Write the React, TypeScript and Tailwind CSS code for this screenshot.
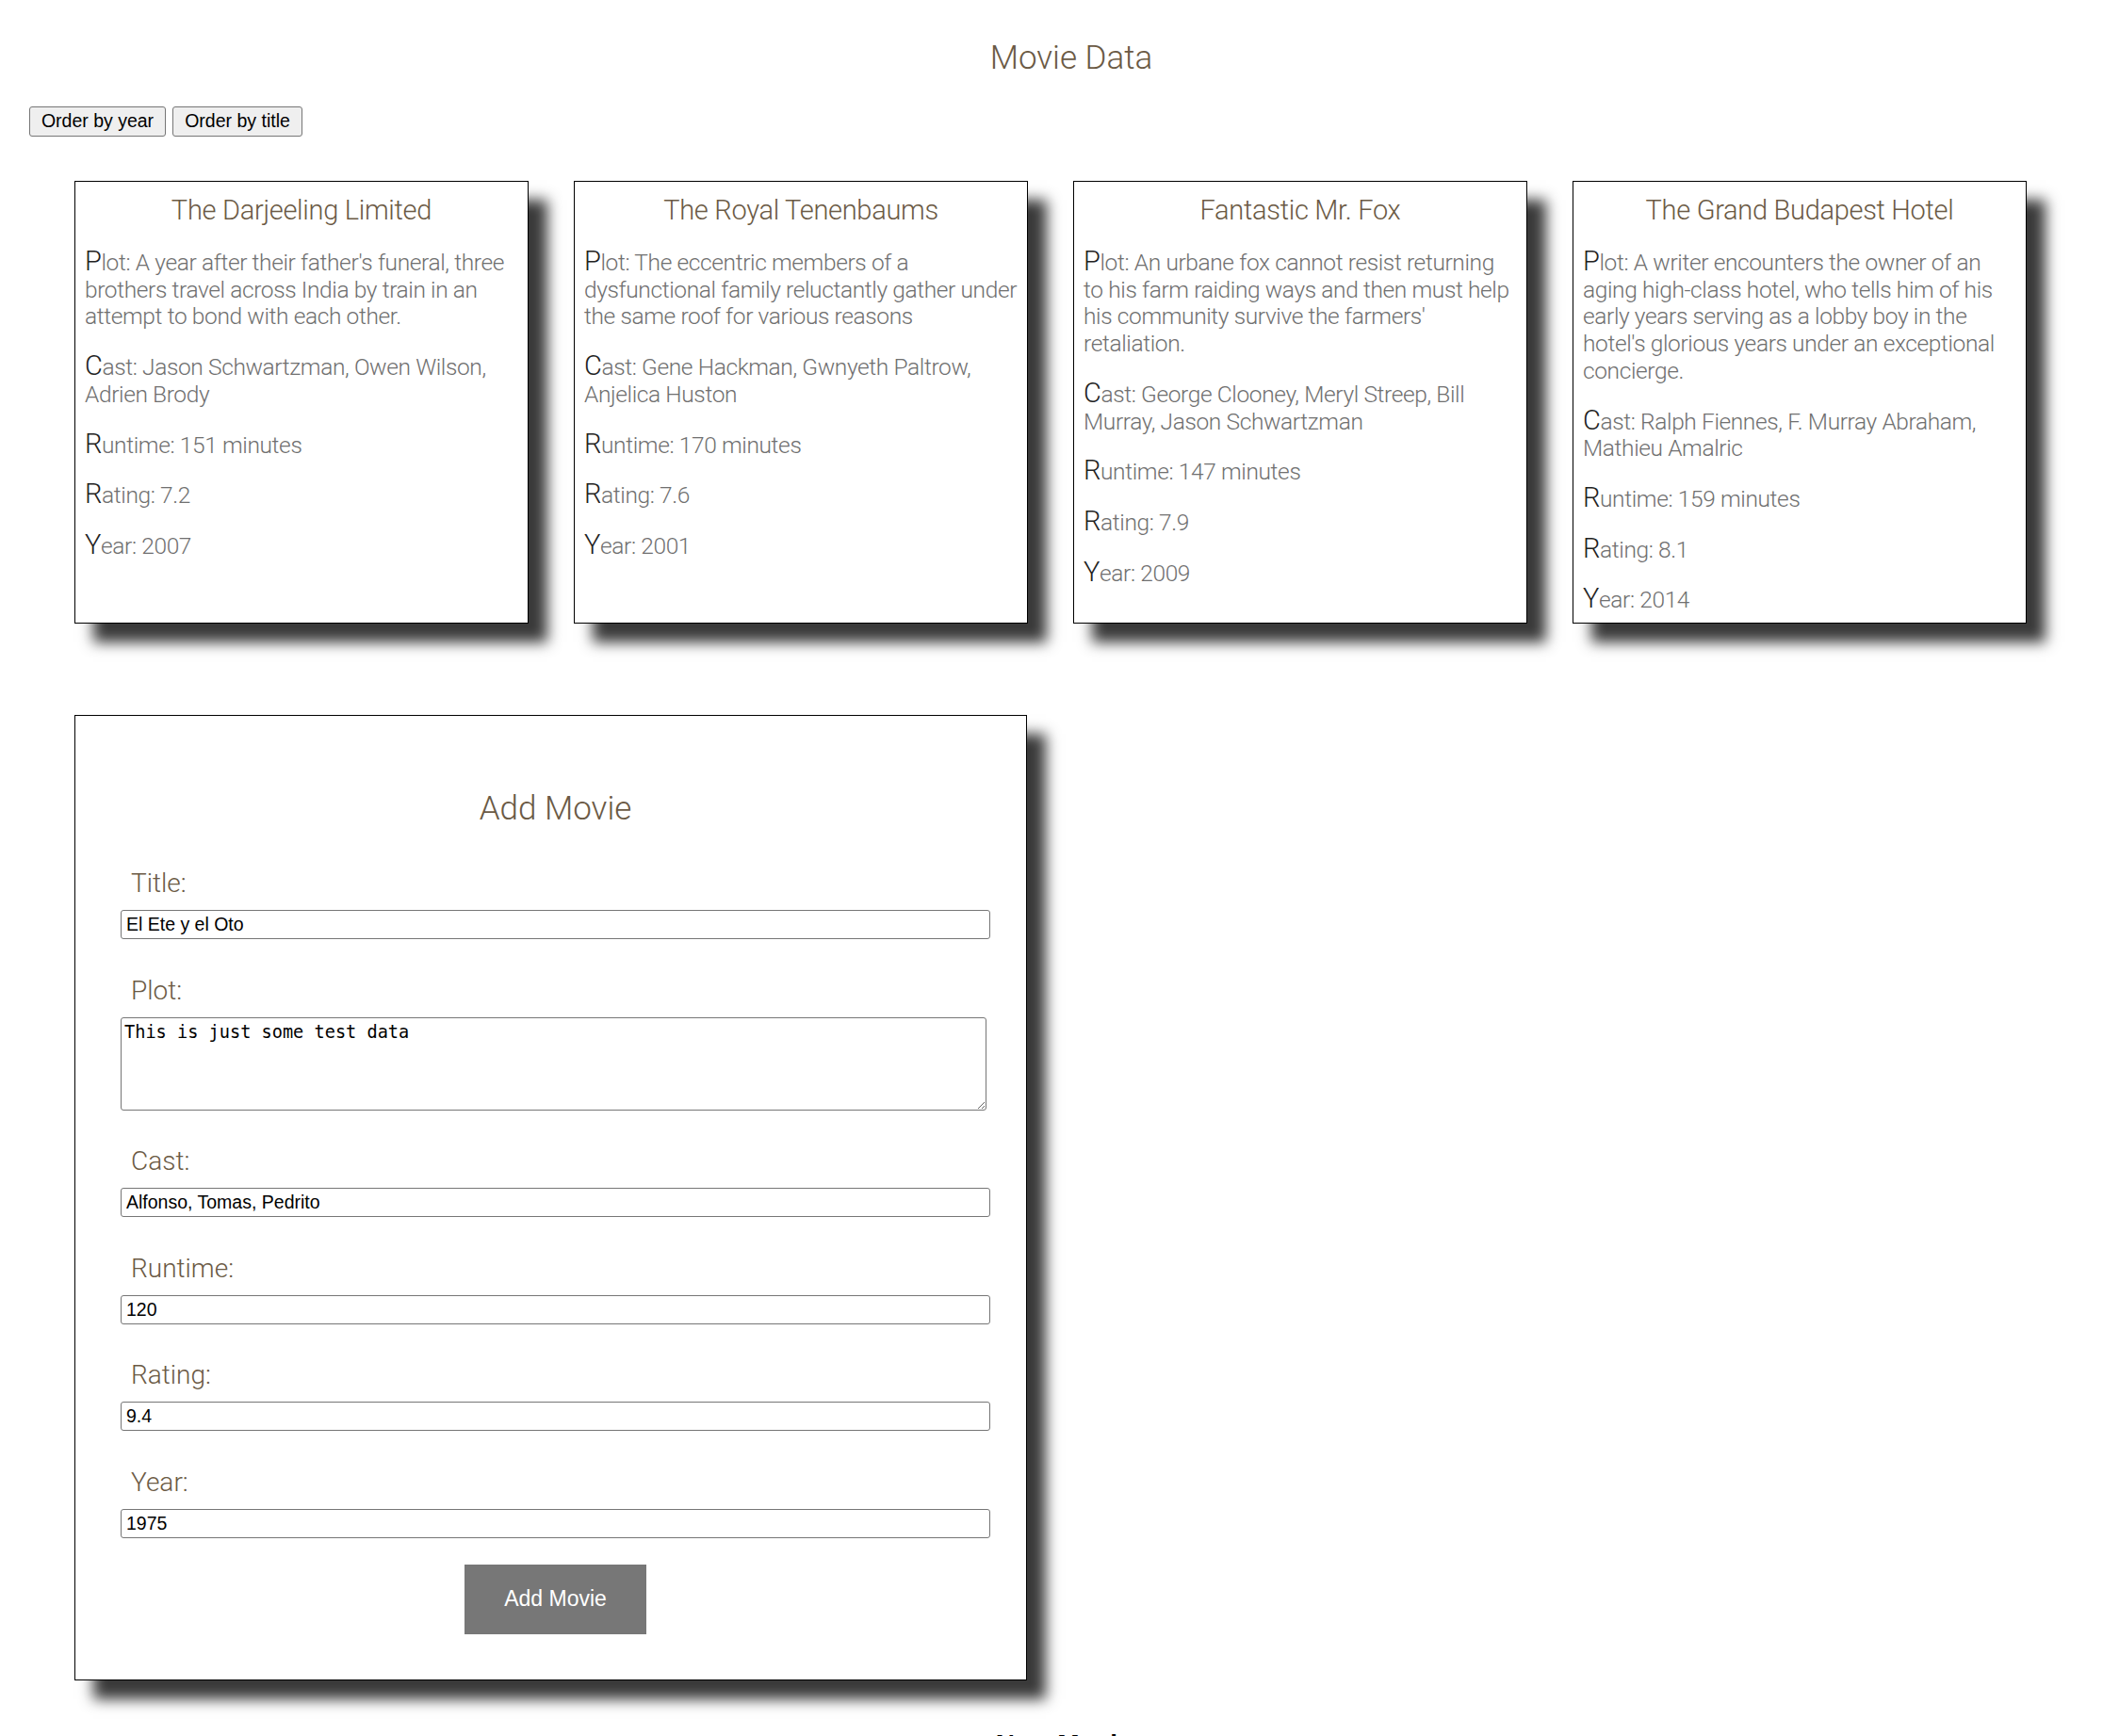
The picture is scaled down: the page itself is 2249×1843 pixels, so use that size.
import React from "react";

type Movie = {
  title: string;
  plot: string;
  cast: string;
  runtime: number;
  rating: number;
  year: number;
};

const movies: Movie[] = [
  {
    title: "The Darjeeling Limited",
    plot: "A year after their father's funeral, three brothers travel across India by train in an attempt to bond with each other.",
    cast: "Jason Schwartzman, Owen Wilson, Adrien Brody",
    runtime: 151,
    rating: 7.2,
    year: 2007,
  },
  {
    title: "The Royal Tenenbaums",
    plot: "The eccentric members of a dysfunctional family reluctantly gather under the same roof for various reasons",
    cast: "Gene Hackman, Gwnyeth Paltrow, Anjelica Huston",
    runtime: 170,
    rating: 7.6,
    year: 2001,
  },
  {
    title: "Fantastic Mr. Fox",
    plot: "An urbane fox cannot resist returning to his farm raiding ways and then must help his community survive the farmers' retaliation.",
    cast: "George Clooney, Meryl Streep, Bill Murray, Jason Schwartzman",
    runtime: 147,
    rating: 7.9,
    year: 2009,
  },
  {
    title: "The Grand Budapest Hotel",
    plot: "A writer encounters the owner of an aging high-class hotel, who tells him of his early years serving as a lobby boy in the hotel's glorious years under an exceptional concierge.",
    cast: "Ralph Fiennes, F. Murray Abraham, Mathieu Amalric",
    runtime: 159,
    rating: 8.1,
    year: 2014,
  },
];

const roboto = { fontFamily: "'Roboto Light', Roboto, 'Noto Sans', sans-serif" };
const arial = { fontFamily: "'Liberation Sans', Arial, sans-serif" };

function Field({ label, value }: { label: string; value: string }) {
  return (
    <p className="mt-[23px] text-[24.5px] leading-[28.7px] font-light tracking-[-0.385px] text-[#707070] first-letter:text-[29px] first-letter:text-[#222]">
      {label}: {value}
    </p>
  );
}

function Card({ m }: { m: Movie }) {
  return (
    <div className="h-[470px] border border-black bg-white px-[10px] pt-[13px] shadow-[20px_20px_14px_#3a3a3a]">
      <h2 className="mb-[2px] text-center text-[29px] leading-[34px] font-light tracking-[-0.3px] text-[#6b5a45]">
        {m.title}
      </h2>
      <Field label="Plot" value={m.plot} />
      <Field label="Cast" value={m.cast} />
      <Field label="Runtime" value={`${m.runtime} minutes`} />
      <Field label="Rating" value={`${m.rating}`} />
      <Field label="Year" value={`${m.year}`} />
    </div>
  );
}

function FormLabel({ children }: { children: React.ReactNode }) {
  return (
    <label className="block pl-[11px] text-[28px] leading-[33px] font-light text-[#6b5a45]" style={roboto}>
      {children}
    </label>
  );
}

function TextInput({ value }: { value: string }) {
  return (
    <input
      readOnly
      value={value}
      className="mt-[12px] block h-[31px] w-[923px] rounded-[3px] border border-[#767676] bg-white px-[5px] text-[19.5px] text-black outline-none"
      style={arial}
    />
  );
}

export default function App() {
  return (
    <div className="min-h-screen overflow-hidden bg-white" style={roboto}>
      <h1 className="pt-[41px] pl-[25px] text-center text-[35px] leading-[41px] font-light text-[#6b5a45]">
        Movie Data
      </h1>
      <div className="mt-[31px] ml-[31px] flex gap-[7px]" style={arial}>
        <button className="h-[32px] w-[145px] rounded-[3px] border border-[#767676] bg-[#efefef] text-[19.5px] text-black">
          Order by year
        </button>
        <button className="h-[32px] w-[138px] rounded-[3px] border border-[#767676] bg-[#efefef] text-[19.5px] text-black">
          Order by title
        </button>
      </div>

      <div className="mt-[47px] ml-[79px] grid grid-cols-[repeat(4,482px)] gap-x-[48px]">
        {movies.map((m) => (
          <Card key={m.title} m={m} />
        ))}
      </div>

      <form className="mt-[97px] ml-[79px] h-[1025px] w-[1011px] border border-black bg-white pt-[78px] shadow-[20px_20px_14px_#3a3a3a]">
        <h2 className="pl-[10px] text-center text-[35px] leading-[41px] font-light text-[#6b5a45]">Add Movie</h2>
        <div className="mt-[42px] ml-[48px] w-[923px]">
          <FormLabel>Title:</FormLabel>
          <TextInput value="El Ete y el Oto" />

          <div className="mt-[37.5px]">
            <FormLabel>Plot:</FormLabel>
            <textarea
              readOnly
              value="This is just some test data"
              className="mt-[12px] block h-[99px] w-[919px] rounded-[3px] border border-[#767676] bg-white px-[3px] py-[4px] text-[18.6px] leading-[22px] text-black outline-none"
              style={{ fontFamily: "'DejaVu Sans Mono', 'Liberation Mono', monospace" }}
            />
          </div>

          <div className="mt-[37.5px]">
            <FormLabel>Cast:</FormLabel>
            <TextInput value="Alfonso, Tomas, Pedrito" />
          </div>
          <div className="mt-[37.5px]">
            <FormLabel>Runtime:</FormLabel>
            <TextInput value="120" />
          </div>
          <div className="mt-[37.5px]">
            <FormLabel>Rating:</FormLabel>
            <TextInput value="9.4" />
          </div>
          <div className="mt-[37.5px]">
            <FormLabel>Year:</FormLabel>
            <TextInput value="1975" />
          </div>

          <div className="mt-[28px] flex justify-center">
            <button
              type="button"
              className="h-[74px] w-[193px] bg-[#777777] text-[23px] text-white"
              style={arial}
            >
              Add Movie
            </button>
          </div>
        </div>
      </form>

      <h2 className="mt-[52px] pl-[25px] text-center text-[28px] leading-[32px] font-bold text-black" style={arial}>
        New Movies
      </h2>
    </div>
  );
}
